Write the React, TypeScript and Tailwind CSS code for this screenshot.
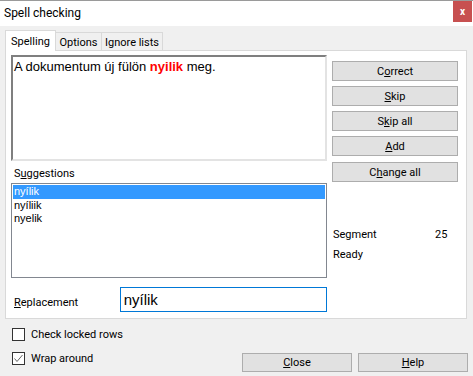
import React from 'react';

const ui = "font-['Roboto','Liberation_Sans',sans-serif]";
const classic = "font-['Liberation_Sans','Arial',sans-serif]";

const Btn: React.FC<{ children: React.ReactNode; className?: string }> = ({ children, className = '' }) => (
  <div
    className={`flex items-center justify-center bg-[#e1e1e1] border border-[#adadad] text-[11px] text-black leading-none ${className}`}
  >
    <span>{children}</span>
  </div>
);

const Check: React.FC<{ checked?: boolean; label: string }> = ({ checked, label }) => (
  <div className="flex items-center h-[13px]">
    <div className="w-[13px] h-[13px] border border-[#333333] bg-white flex items-center justify-center">
      {checked && (
        <svg width="11" height="11" viewBox="0 0 11 11">
          <polyline points="1.5,5.5 4,8.5 9.5,2" fill="none" stroke="#666666" strokeWidth="1" />
        </svg>
      )}
    </div>
    <span className="ml-[6px] text-[11px] leading-[13px] text-black">{label}</span>
  </div>
);

const suggestions = ['nyílik', 'nyíliik', 'nyelik'];

export default function App() {
  return (
    <div className={`w-[473px] h-[376px] bg-[#f0f0f0] border-t border-[#9a9a9a] flex flex-col overflow-hidden ${ui}`}>
      {/* title bar */}
      <div className="h-[25px] bg-white flex justify-between shrink-0">
        <div className="pl-[4px] pt-[5px] text-[12px] leading-[14px] text-black">Spell checking</div>
        <div className="w-[19px] h-[21px] mr-[1px] bg-[#c75050] flex items-center justify-center text-white text-[10px] font-bold leading-none">
          x
        </div>
      </div>

      <div className="pl-[5px] pt-[4px] flex flex-col">
        {/* tabs */}
        <div className="flex items-end h-[20px] relative z-10">
          <div className="w-[51px] h-[21px] -mb-px bg-white border border-[#d9d9d9] border-b-0 text-[11px] text-black flex items-start justify-center pt-[3px]">
            Spelling
          </div>
          <div className="w-[46px] h-[18px] bg-[#f0f0f0] border border-[#d9d9d9] border-l-0 border-b-0 text-[11px] text-black flex items-start justify-center pt-[2px]">
            Options
          </div>
          <div className="w-[61px] h-[18px] bg-[#f0f0f0] border border-[#d9d9d9] border-l-0 border-b-0 text-[11px] text-black flex items-start justify-center pt-[2px]">
            Ignore lists
          </div>
        </div>

        {/* panel */}
        <div className="w-[462px] h-[269px] bg-white border border-[#d9d9d9] flex pl-[5px] pt-[4px]">
          <div className="w-[316px] flex flex-col">
            <div className="h-[106px] border-2 border-t-[#7f7f7f] border-l-[#7f7f7f] border-b-[#e3e3e3] border-r-[#e3e3e3] pl-[1px] pt-[2px]">
              <p className={`${classic} text-[13px] leading-[15px] text-black`}>
                A dokumentum új fülön <span className="font-bold text-[#ff0000]">nyilik</span> meg.
              </p>
            </div>
            <div className="mt-[6px] pl-[3px] text-[11px] leading-[13px] text-black">
              S<u>u</u>ggestions
            </div>
            <div className="mt-[3px] h-[95px] border border-[#828790] p-px">
              {suggestions.map((s, i) => (
                <div
                  key={s}
                  className={`${classic} pl-[1px] text-[11px] leading-[13px] ${
                    i === 0 ? 'h-[14px] bg-[#3399ff] text-white' : 'h-[13px] text-black'
                  }`}
                >
                  {s}
                </div>
              ))}
            </div>
            <div className="mt-[9px] flex items-center">
              <div className="w-[109px] pl-[3px] pt-[6px] text-[11px] leading-[13px] text-black">
                <u>R</u>eplacement
              </div>
              <div className="w-[208px] h-[25px] border border-[#0078d7] flex items-center pl-[3px]">
                <span className={`${classic} text-[15px] leading-none text-black`}>nyílik</span>
              </div>
            </div>
          </div>

          <div className="ml-[5px] w-[126px] flex flex-col pt-[6px]">
            <div className="flex flex-col gap-[5px]">
              <Btn className="h-[20px]">
                C<u>o</u>rrect
              </Btn>
              <Btn className="h-[20px]">
                <u>S</u>kip
              </Btn>
              <Btn className="h-[20px]">
                S<u>k</u>ip all
              </Btn>
              <Btn className="h-[20px]">
                <u>A</u>dd
              </Btn>
            </div>
            <Btn className="h-[20px] mt-[6px]">
              C<u>h</u>ange all
            </Btn>
            <div className="mt-[46px] flex pl-[1px] text-[11px] leading-[13px] text-black">
              <span className="w-[102px]">Segment</span>
              <span>25</span>
            </div>
            <div className="mt-[7px] pl-[1px] text-[11px] leading-[13px] text-black">Ready</div>
          </div>
        </div>

        {/* bottom */}
        <div className="w-[463px] flex justify-between">
          <div className="flex flex-col gap-[11px] pt-[9px] pl-[7px]">
            <Check label="Check locked rows" />
            <Check checked label="Wrap around" />
          </div>
          <div className="flex gap-[6px] pt-[34px]">
            <Btn className="w-[110px] h-[19px]">
              <u>C</u>lose
            </Btn>
            <Btn className="w-[110px] h-[19px]">
              <u>H</u>elp
            </Btn>
          </div>
        </div>
      </div>
    </div>
  );
}
